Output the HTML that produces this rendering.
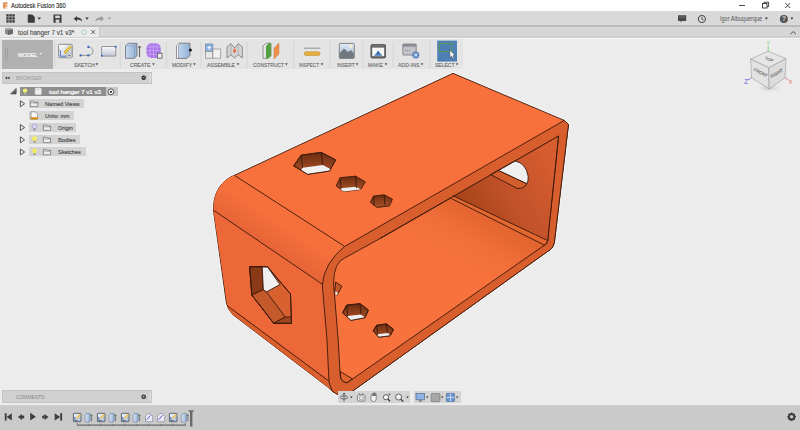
<!DOCTYPE html>
<html><head><meta charset="utf-8">
<style>
*{margin:0;padding:0;box-sizing:border-box}
html,body{width:800px;height:430px;overflow:hidden;background:#ECECEC;font-family:"Liberation Sans",sans-serif;position:relative}
.a{position:absolute}
.t{position:absolute;white-space:nowrap;line-height:1;transform-origin:0 0}
svg{position:absolute;overflow:visible}
</style></head><body>
<div class="a" style="left:0;top:0;width:800px;height:11px;background:#FFFFFF"></div>
<div class="a" style="left:0;top:11px;width:800px;height:14px;background:#D9D9D9"></div>
<div class="a" style="left:0;top:24.5px;width:800px;height:2px;background:linear-gradient(#C4C4C4,#B2B2B2 50%,#C4C4C4)"></div>
<div class="a" style="left:0;top:26.5px;width:800px;height:10px;background:#D6D6D6"></div>
<div class="a" style="left:0;top:36px;width:800px;height:2px;background:linear-gradient(#C6C6C6,#D8D8D8)"></div>
<div class="a" style="left:0;top:26.5px;width:99px;height:10px;background:#EAEAEA"></div>
<div class="a" style="left:0;top:38px;width:800px;height:1px;background:#F4F4F4"></div>
<div class="a" style="left:0;top:39px;width:463px;height:29.6px;background:#E4E4E4;border-radius:0 1px 1px 0"></div>
<div class="a" style="left:2px;top:39.8px;width:51px;height:28.8px;background:#B1B1B1"></div>
<div class="a" style="left:2px;top:71.5px;width:150px;height:12px;background:#D0D0D0;border:1px solid #C4C4C4"></div>
<div class="a" style="left:2px;top:390.4px;width:150px;height:12.2px;background:#D0D0D0;border:1px solid #C4C4C4"></div>
<div class="a" style="left:20px;top:87px;width:86px;height:8.6px;background:#8E8E8E"></div>
<div class="a" style="left:106px;top:87px;width:12px;height:8.6px;background:#C8C8C8"></div>
<div class="a" style="left:29.2px;top:98.8px;width:54.6px;height:9.5px;background:#D3D3D3"></div>
<div class="a" style="left:29.2px;top:110.9px;width:44.8px;height:9px;background:#D3D3D3"></div>
<div class="a" style="left:29.2px;top:122.9px;width:47px;height:9.1px;background:#D3D3D3"></div>
<div class="a" style="left:29.2px;top:135px;width:51px;height:9.1px;background:#D3D3D3"></div>
<div class="a" style="left:29.2px;top:147.1px;width:57px;height:9.1px;background:#D3D3D3"></div>

<svg class="a" style="left:0;top:0" width="800" height="430" viewBox="0 0 800 430">
<defs>
<linearGradient id="gRW" x1="470" y1="215" x2="556" y2="165" gradientUnits="userSpaceOnUse">
<stop offset="0" stop-color="#A84418"/><stop offset="0.45" stop-color="#C2522A"/><stop offset="1" stop-color="#D65D2E"/></linearGradient>
<linearGradient id="gFl" x1="500" y1="222" x2="470" y2="275" gradientUnits="userSpaceOnUse">
<stop offset="0" stop-color="#E2642E"/><stop offset="0.55" stop-color="#F26F3A"/><stop offset="1" stop-color="#F7723C"/></linearGradient>
<linearGradient id="gHole" x1="0" y1="0" x2="0" y2="1">
<stop offset="0" stop-color="#6A2C10"/><stop offset="1" stop-color="#B0522A"/></linearGradient>
<linearGradient id="gFil" x1="240" y1="195" x2="222" y2="222" gradientUnits="userSpaceOnUse">
<stop offset="0" stop-color="#F6703C"/><stop offset="1" stop-color="#E46236"/></linearGradient>
<linearGradient id="gBand" x1="0" y1="0" x2="0" y2="1">
<stop offset="0" stop-color="#D25A2A"/><stop offset="1" stop-color="#EA6A36"/></linearGradient>
</defs>
<g stroke="#3A180A" stroke-width="0.9" stroke-linejoin="round">
<!-- silhouette base -->
<path fill="none" stroke="#FAFAFA" stroke-width="2.6" d="M453,73.3 L564.3,120.4 L568.5,124.4 L554.4,242.3 Q553,249 547.7,251.4 L353,390.8 Q341,399 332,391 L327.7,387 L233,314.8 Q227.5,309.5 226.4,303 L213.4,210.2 C213,192 222,180 234.4,175.3 Z"/>
<path fill="#F8703C" d="M453,73.3 L564.3,120.4 L568.5,124.4 L554.4,242.3 Q553,249 547.7,251.4 L353,390.8 Q341,399 332,391 L327.7,387 L233,314.8 Q227.5,309.5 226.4,303 L213.4,210.2 C213,192 222,180 234.4,175.3 Z"/>
<!-- front-left face -->
<path fill="#EC6838" stroke="none" d="M213.4,210.2 L322.3,284.2 L327,340 L329,382 L227.3,304.9 Z"/>
<!-- fillet top/left -->
<path fill="url(#gFil)" stroke="none" d="M234.4,175.3 L344.7,246.4 Q330,257 324.2,274 L322.3,284.2 L213.4,210.2 C213,192 222,180 234.4,175.3 Z"/>
<!-- bottom fillet strip -->
<path fill="#DC5F2E" stroke="none" d="M227,305.5 L328.6,380.8 L332,391 L327.7,387 L233,314.8 Q227.5,309.5 226.4,303 Z"/>
<!-- rim -->
<path fill="#D95E2D" d="M344.7,246.4 L564.3,120.4 L568.5,124.4 L554.4,242.3 Q553,249 547.7,251.4 L353,390.8 Q341,399 332,391 L329,382 L327,340 L322.3,285 Q324,263 344.7,246.4 Z"/>
<!-- interior opening -->
<path fill="url(#gFl)" d="M380,238.5 L558.6,136 L549.8,220 L547.7,241 Q546.5,244.5 543.5,245.8 L347,382.8 Q342,382.5 340.3,377 L338.2,340 L333.5,283 Q334,262 344.7,258 Z"/>
<!-- right wall interior -->
<path fill="url(#gRW)" stroke="none" d="M452,196.5 L557.5,136.5 L549.8,220 L547.7,240.5 Z"/>
<path fill="#E4672F" stroke="none" d="M452.6,195.6 L547.5,240.5 L544.5,245.2 L451.5,198.6 Z"/>
<path fill="none" d="M452.6,195.6 L547.5,240.5 M451.5,198.6 L544.5,245.2"/>
<!-- inner bottom-left fillet line -->
<path fill="#E2652F" d="M340.4,371.6 L352.4,378.9 L347,382.6 Q342,382.4 340.6,377 Z"/>
<!-- round hole -->
<path fill="#F0F0F0" d="M498,170.3 L514.9,161 Q526,163 528.2,176.4 Q528.4,181.5 526.8,183.8 Z"/>
<path fill="#D25E2C" d="M490.6,174.6 L498,170.3 L526.8,183.8 Q524,189 517.5,188.6 Z"/>
<!-- top hex holes -->
<clipPath id="h1"><path d="M293.7,165.9 L301.2,155.2 L321.2,152.4 L335.6,159.9 L329.5,171 L307.7,174.3 Z"/></clipPath>
<path fill="url(#gHole)" d="M293.7,165.9 L301.2,155.2 L321.2,152.4 L335.6,159.9 L329.5,171 L307.7,174.3 Z"/>
<path fill="#F0F0F0" stroke="none" clip-path="url(#h1)" d="M295.2,178.9 L302.7,167.8 L322.7,165 L337.1,172.5 L331,183.6 L309.2,186.9 Z"/>
<path fill="none" d="M301.2,155.2 L302.5,167.6 M321.2,152.4 L322.6,164.6 M293.7,165.9 L301.2,155.2 L321.2,152.4 L335.6,159.9 L329.5,171 L307.7,174.3 Z"/>
<clipPath id="h2"><path d="M336.1,185.9 L340.2,177.7 L355.6,176.2 L365.3,181.8 L360.7,189.5 L343.8,191.5 Z"/></clipPath>
<path fill="url(#gHole)" d="M336.1,185.9 L340.2,177.7 L355.6,176.2 L365.3,181.8 L360.7,189.5 L343.8,191.5 Z"/>
<path fill="#F0F0F0" stroke="none" clip-path="url(#h2)" d="M336.6,196.9 L340.7,188.2 L356.1,186.7 L365.8,192.3 L361.2,200 L344.3,202 Z"/>
<path fill="none" d="M340.2,177.7 L341,189 M355.6,176.2 L356.4,188.2"/>
<path fill="url(#gHole)" d="M370.4,202.3 L373.5,196.1 L384.2,194.8 L392.4,199.2 L389.4,205.9 L377.1,207.4 Z"/>
<path fill="none" d="M373.5,196.1 L374.2,206 M384.2,194.8 L385,205"/>
<!-- floor hex holes -->
<clipPath id="h4"><path d="M342.6,312.8 L346.7,305.1 L360,303.7 L368.4,310 L364.9,317.7 L350.9,320.4 Z"/></clipPath>
<path fill="url(#gHole)" d="M342.6,312.8 L346.7,305.1 L360,303.7 L368.4,310 L364.9,317.7 L350.9,320.4 Z"/>
<path fill="#F0F0F0" stroke="none" clip-path="url(#h4)" d="M343.6,324 L347.7,316 L361,314.6 L369.4,321 L365.9,328.7 L351.9,331.4 Z"/>
<path fill="none" d="M346.7,305.1 L347.6,315.8 M360,303.7 L361,314.6 M342.6,312.8 L346.7,305.1 L360,303.7 L368.4,310 L364.9,317.7 L350.9,320.4 Z"/>
<clipPath id="h5"><path d="M373.2,330.9 L376.7,325.3 L386.5,323.9 L393.5,329.5 L390,335.8 L378.8,337.2 Z"/></clipPath>
<path fill="url(#gHole)" d="M373.2,330.9 L376.7,325.3 L386.5,323.9 L393.5,329.5 L390,335.8 L378.8,337.2 Z"/>
<path fill="#F0F0F0" stroke="none" clip-path="url(#h5)" d="M374.2,340 L377.7,334.3 L387.5,332.9 L394.5,338.5 L391,344.8 L379.8,346.2 Z"/>
<path fill="none" d="M376.7,325.3 L377.5,334.3 M386.5,323.9 L387.3,333 M373.2,330.9 L376.7,325.3 L386.5,323.9 L393.5,329.5 L390,335.8 L378.8,337.2 Z"/>
<path fill="#C4562A" d="M335.6,282 L341.9,286.3 L337,295.3 L334.8,292 Z"/>
<path fill="#F0F0F0" stroke="none" d="M335.5,291 L337.8,293 L337,295.3 L335.2,293.8 Z"/>
<!-- big hex on left face -->
<path fill="#D9612F" d="M249.7,266.8 L267.5,266.8 L290.5,294 L291.5,323.3 L273.7,323.3 L251.8,295 Z"/>
<path fill="#8A3A16" d="M249.7,266.8 L262.2,266.8 L263.3,289.8 L251.8,295 Z"/>
<path fill="#F0F0F0" d="M262.2,266.8 L267.5,266.8 L280,284.6 L266.4,291.9 L263.3,289.8 Z"/>
<path fill="#C45A2C" d="M251.8,295 L263.3,289.8 L266.4,291.9 L285.3,317 L273.7,323.3 Z"/>
<path fill="#9E4620" d="M273.7,323.3 L285.3,317 L291.3,317 L291.5,323.3 Z"/>
<path fill="none" d="M249.7,266.8 L267.5,266.8 L290.5,294 L291.5,323.3 L273.7,323.3 L251.8,295 Z"/>

<!-- edges -->
<path fill="none" d="M380,238.5 L558.6,136 L549.8,220 L547.7,241 Q546.5,244.5 543.5,245.8"/>
<path fill="none" d="M234.4,175.3 L344.7,246.4 M213.4,210.2 L322.3,284.2 M227,305.5 L328.6,380.8"/>
</g>
</svg>

<!-- bottom bar -->
<div class="a" style="left:0;top:404.5px;width:800px;height:26px;background:linear-gradient(#D4D4D4,#CACACA 1.2px)"></div>
<!-- title icon F -->
<svg style="left:0;top:0" width="20" height="12">
<defs><linearGradient id="fg" x1="0" y1="0" x2="0" y2="1"><stop offset="0" stop-color="#F0A050"/><stop offset="1" stop-color="#E87830"/></linearGradient></defs>
<rect x="2.8" y="2.2" width="5" height="6.6" fill="#F6E2CC"/>
<path d="M3.3,2.6 H7.3 V4.1 H4.9 V5.1 H6.8 V6.5 H4.9 V8.6 H3.3 Z" fill="#DE8440"/>
</svg>
<!-- window controls -->
<svg style="left:730px;top:0" width="70" height="12">
<line x1="9" y1="5.5" x2="15" y2="5.5" stroke="#333" stroke-width="0.9"/>
<rect x="32.5" y="3.5" width="4.5" height="4.5" fill="none" stroke="#333" stroke-width="0.9"/>
<path d="M34,3.5 V2.2 H38.6 V6.6 H37" fill="none" stroke="#333" stroke-width="0.9"/>
<path d="M55.3,3 L60.2,8 M60.2,3 L55.3,8" stroke="#333" stroke-width="0.9"/>
</svg>
<!-- toolbar icons -->
<svg style="left:0;top:11px" width="120" height="15">
<g fill="#3A3A3A">
<rect x="6.3" y="3.2" width="2.4" height="2.4"/><rect x="9.3" y="3.2" width="2.4" height="2.4"/><rect x="12.3" y="3.2" width="2.4" height="2.4"/>
<rect x="6.3" y="6.2" width="2.4" height="2.4"/><rect x="9.3" y="6.2" width="2.4" height="2.4"/><rect x="12.3" y="6.2" width="2.4" height="2.4"/>
<rect x="6.3" y="9.2" width="2.4" height="2.4"/><rect x="9.3" y="9.2" width="2.4" height="2.4"/><rect x="12.3" y="9.2" width="2.4" height="2.4"/>
</g>
<path d="M27.8,3.5 H32.3 L34.8,6 V11.8 H27.8 Z" fill="#3C3C3C"/>
<path d="M37.3,6.4 H41.1 L39.2,8.8 Z" fill="#3C3C3C"/>
<path d="M53.5,3.5 H61.5 V11.8 H53.5 Z" fill="#3C3C3C"/>
<rect x="55.2" y="4.6" width="4.6" height="2.5" fill="#D9D9D9"/>
<rect x="55.6" y="8.6" width="3.8" height="3.2" fill="#D9D9D9"/>
<path d="M73.6,7.8 L77,5 V6.6 C80,6.6 82,7.6 82,10.6 C80.8,9 79.4,8.8 77,8.8 V10.5 Z" fill="#3C3C3C"/>
<path d="M85.2,6.4 H88.8 L87,8.8 Z" fill="#3C3C3C"/>
<path d="M104,7.8 L100.6,5 V6.6 C97.6,6.6 95.6,7.6 95.6,10.6 C96.8,9 98.2,8.8 100.6,8.8 V10.5 Z" fill="#9A9A9A"/>
<path d="M107.6,6.4 H111.2 L109.4,8.8 Z" fill="#9A9A9A"/>
</svg>
<svg style="left:670px;top:11px" width="130" height="15">
<path d="M8,4.2 H16.2 V10 H12 L10.8,11.6 L10.6,10 H8 Z" fill="#4A4A4A"/>
<line x1="9.2" y1="6" x2="15" y2="6" stroke="#9A9A9A" stroke-width="0.5"/>
<circle cx="31.9" cy="8" r="3.6" fill="none" stroke="#444" stroke-width="1"/>
<path d="M31.9,5.8 V8 L33.6,9.2" fill="none" stroke="#444" stroke-width="0.9"/>
<path d="M95,6.5 H97.8 L96.4,8.8 Z" fill="#333"/>
<circle cx="113.9" cy="8" r="4" fill="#555"/>
<text x="113.9" y="10.4" font-size="6.5" font-weight="700" fill="#D9D9D9" text-anchor="middle" font-family="Liberation Sans">?</text>
<path d="M120.6,6.5 H123.3 L121.95,8.8 Z" fill="#333"/>
</svg>
<!-- tab -->
<svg style="left:0;top:26px" width="800" height="14">
<path d="M5,2.8 L10,1.8 L13,3.2 V7.8 L8,9 L5,7.6 Z" fill="#8A8A8A"/>
<path d="M5,2.8 L10,1.8 L13,3.2 L8,4.2 Z" fill="#A8A8A8"/>
<path d="M8,4.2 L13,3.2 V7.8 L8,9 Z" fill="#6A6A6A"/>
<circle cx="84" cy="6.2" r="2.3" fill="none" stroke="#8FCFB8" stroke-width="0.8"/>
<path d="M91.2,4 L95.2,8 M95.2,4 L91.2,8" stroke="#555" stroke-width="0.9"/>
<line x1="99.5" y1="0" x2="99.5" y2="11" stroke="#C4C4C4" stroke-width="1"/>
<path d="M790.5,8.2 L793.2,5.5 L795.9,8.2" fill="none" stroke="#444" stroke-width="1"/>
</svg>
<!-- ribbon icons -->
<svg style="left:0;top:38px" width="470" height="35">
<defs>
<linearGradient id="lb" x1="0" y1="0" x2="1" y2="1"><stop offset="0" stop-color="#FFFFFF"/><stop offset="1" stop-color="#B8C4D6"/></linearGradient>
<linearGradient id="rb" x1="0" y1="0" x2="0" y2="1"><stop offset="0" stop-color="#FAFAFC"/><stop offset="1" stop-color="#C2C6D6"/></linearGradient>
<linearGradient id="bx" x1="0" y1="0" x2="1" y2="0"><stop offset="0" stop-color="#C8DAF0"/><stop offset="1" stop-color="#90B0D6"/></linearGradient>
<linearGradient id="sky" x1="0" y1="0" x2="0" y2="1"><stop offset="0" stop-color="#DDE8F4"/><stop offset="1" stop-color="#A8C0DA"/></linearGradient>
</defs>
<!-- grip on MODEL -->
<line x1="5.5" y1="9.7" x2="5.5" y2="21.4" stroke="#9A9A9A" stroke-width="0.7"/><line x1="7.5" y1="9.7" x2="7.5" y2="21.4" stroke="#9A9A9A" stroke-width="0.7"/>
<path d="M39.8,15 H42 L40.9,16.8 Z" fill="#FFF"/>
<!-- separators -->
<g stroke="#D2D2D2" stroke-width="0.8">
<line x1="55" y1="4" x2="55" y2="30"/><line x1="120.3" y1="4" x2="120.3" y2="30"/><line x1="166.3" y1="4" x2="166.3" y2="30"/>
<line x1="201" y1="4" x2="201" y2="30"/><line x1="247" y1="4" x2="247" y2="30"/><line x1="293.7" y1="4" x2="293.7" y2="30"/>
<line x1="330" y1="4" x2="330" y2="30"/><line x1="363" y1="4" x2="363" y2="30"/><line x1="393" y1="4" x2="393" y2="30"/>
<line x1="429.8" y1="4" x2="429.8" y2="30"/>
</g>
<!-- sketch create -->
<rect x="58.6" y="6.3" width="13.6" height="13.4" rx="0.8" fill="url(#lb)" stroke="#808080" stroke-width="0.9"/>
<path d="M60.4,12 V18.2 H66" fill="none" stroke="#3A6CC8" stroke-width="0.9"/>
<path d="M64.5,15 L70.8,8.4" stroke="#B08A20" stroke-width="2.6"/>
<path d="M64.5,15 L70.8,8.4" stroke="#F2D04A" stroke-width="1.7"/>
<circle cx="69.3" cy="17.6" r="2.6" fill="#F4F4F4" stroke="#909090" stroke-width="0.6"/>
<path d="M69.3,16 V19.2 M67.7,17.6 H70.9" stroke="#707070" stroke-width="0.8"/>
<!-- arc line -->
<path d="M80.6,17.4 H88.3 M88.3,8.9 C94.5,8.9 94.5,17.4 88.3,17.4" fill="none" stroke="#8A8A8A" stroke-width="0.9"/>
<circle cx="80.6" cy="17.4" r="1.1" fill="#2F5FC0"/><circle cx="88.3" cy="17.4" r="1.1" fill="#2F5FC0"/><circle cx="88.3" cy="8.9" r="1.1" fill="#2F5FC0"/>
<!-- rect -->
<rect x="101.6" y="8.5" width="14.2" height="9.6" rx="0.6" fill="url(#rb)" stroke="#8A8A8A" stroke-width="0.9"/>
<circle cx="115.6" cy="8.8" r="1" fill="#2F5FC0"/><circle cx="101.9" cy="17.8" r="1" fill="#2F5FC0"/>
<!-- extrude -->
<path d="M125.5,8 L128,5.3 H137 V17.5 L134.5,20.3 H125.5 Z" fill="url(#bx)" stroke="#6E6E6E" stroke-width="0.8"/>
<path d="M125.5,8 H134.5 V20.3 M134.5,8 L137,5.3" fill="none" stroke="#7E8EA8" stroke-width="0.5"/>
<path d="M139.6,19 V8.2 M138.4,9.6 L139.6,8 L140.8,9.6" fill="none" stroke="#333" stroke-width="0.8"/>
<!-- form sphere -->
<rect x="146.5" y="5.2" width="14.2" height="14.8" rx="5" fill="#A874E8"/>
<g stroke="#D9B8FF" stroke-width="0.6"><line x1="146.5" y1="9" x2="160.7" y2="9"/><line x1="146.5" y1="12.6" x2="160.7" y2="12.6"/><line x1="146.5" y1="16.2" x2="160.7" y2="16.2"/>
<line x1="150.2" y1="5.2" x2="150.2" y2="20"/><line x1="153.6" y1="5.2" x2="153.6" y2="20"/><line x1="157" y1="5.2" x2="157" y2="20"/></g>
<rect x="157.4" y="15.2" width="4.6" height="5" fill="#EEE" stroke="#444" stroke-width="0.7"/>
<!-- modify press pull -->
<path d="M176.5,8 L179.5,5.2 H190 V17.4 L187,20.4 H176.5 Z" fill="url(#bx)" stroke="#6E6E6E" stroke-width="0.8"/>
<path d="M176.5,8 L179.5,5.2 L181,5.2 L178.5,8 V20.4 H176.5 Z" fill="#F0F4F8" stroke="#6E6E6E" stroke-width="0.5"/>
<circle cx="190.4" cy="12" r="1.5" fill="#111"/>
<!-- assemble new component -->
<rect x="205.3" y="6" width="7.6" height="7.4" fill="#8AB0DE" stroke="#6A7A90" stroke-width="0.6"/>
<path d="M207.3,9.7 H211 M209.15,7.8 V11.6" stroke="#FFF" stroke-width="1"/>
<rect x="205.3" y="13.4" width="7.6" height="6.8" fill="#E8E8E8" stroke="#7A7A7A" stroke-width="0.6"/>
<path d="M212.9,11 H220.6 V20.2 H212.9 Z" fill="#F2F2F2" stroke="#7A7A7A" stroke-width="0.6"/>
<!-- joint -->
<path d="M227,9 L231,5.6 L234.6,10 L238.2,5.6 L242.4,9 V20 L238.2,16.8 L234.6,20 L231,16.8 L227,20 Z" fill="#D4D4D4" stroke="#6A6A6A" stroke-width="0.7"/>
<path d="M231,5.6 V16.8 M238.2,5.6 V16.8" stroke="#8A8A8A" stroke-width="0.5"/>
<path d="M233,13 L234.6,10 L236.2,13 L234.6,15.5 Z" fill="#E86A3A"/>
<!-- construct -->
<path d="M263,8 L266,5.2 H271 V17.8 L268,20.4 H263 Z" fill="#E6E6E6" stroke="#6E6E6E" stroke-width="0.7"/>
<path d="M266,8 L269,5.2 H271 V17.8 L268,20.4 H266 Z" fill="#55A040"/>
<path d="M274,10 L279,5 V16 L274,21 Z" fill="#F0904A" stroke="#B06A30" stroke-width="0.4"/>
<!-- inspect -->
<line x1="304" y1="10.2" x2="320.3" y2="10.2" stroke="#8A8A8A" stroke-width="0.9"/>
<rect x="304.3" y="13.8" width="15.8" height="3.6" rx="1.6" fill="#E8B040" stroke="#B08020" stroke-width="0.5"/>
<!-- insert -->
<rect x="339.3" y="5.4" width="15" height="15" rx="0.8" fill="url(#sky)" stroke="#6A6A6A" stroke-width="0.8"/>
<path d="M339.8,19.9 L339.8,15 L344,10.6 L348,14 L351,12 L353.8,15 V19.9 Z" fill="#707880"/>
<circle cx="351" cy="8.4" r="1.3" fill="#FFF8D0"/>
<!-- make -->
<rect x="370.4" y="6" width="15.6" height="14.4" rx="2" fill="#5E5E5E"/>
<rect x="372.2" y="9.6" width="12" height="8.6" fill="#F8F8F8"/>
<line x1="372.4" y1="7.8" x2="384" y2="7.8" stroke="#9A9A9A" stroke-width="0.6"/>
<path d="M375.5,16.5 L378.2,12.4 L380.9,16.5 Z" fill="#2E68B0"/>
<rect x="374.5" y="16.4" width="7.4" height="1.3" fill="#2E68B0"/>
<!-- add-ins -->
<rect x="402.8" y="6" width="13.4" height="11" rx="0.8" fill="#C2C2CA" stroke="#6A6A6A" stroke-width="0.7"/>
<rect x="402.8" y="6" width="13.4" height="2.6" fill="#8A8A92"/>
<line x1="405" y1="12.5" x2="410" y2="12.5" stroke="#6A6A6A" stroke-width="0.6" stroke-dasharray="1 1"/>
<circle cx="415.8" cy="17" r="3.3" fill="#6A96D8" stroke="#3A5A90" stroke-width="0.5"/>
<path d="M414.4,15.6 L417.2,18.4 M417.2,15.6 L414.4,18.4" stroke="#FFF" stroke-width="0.8"/>
<!-- select -->
<rect x="437.2" y="2.6" width="19.8" height="21" fill="#4E80B6"/>
<rect x="439.4" y="5.6" width="12.4" height="8" fill="none" stroke="#5E9A4E" stroke-width="0.9"/>
<path d="M450,12.2 V19.6 L451.7,18 L453,20.6 L454.1,20 L452.9,17.5 L455.1,17.4 Z" fill="#FFF" stroke="#333" stroke-width="0.4"/>
<!-- label arrows -->
<g fill="#555">
<path d="M95.6,25.2 H98.2 L96.9,27.6 Z"/><path d="M152.2,25.2 H154.8 L153.5,27.6 Z"/><path d="M193.2,25.2 H195.8 L194.5,27.6 Z"/>
<path d="M236.7,25.2 H239.3 L238.0,27.6 Z"/><path d="M285.1,25.2 H287.7 L286.4,27.6 Z"/><path d="M320.7,25.2 H323.3 L322.0,27.6 Z"/>
<path d="M355.7,25.2 H358.3 L357.0,27.6 Z"/><path d="M384.7,25.2 H387.3 L386.0,27.6 Z"/><path d="M420.7,25.2 H423.3 L422.0,27.6 Z"/>
<path d="M455.7,25.2 H458.3 L457.0,27.6 Z"/>
</g>
</svg>
<!-- browser header icons -->
<svg style="left:0;top:70px" width="160" height="90">
<path d="M5,7.9 L7.2,6.6 V9.2 Z M7.4,7.9 L9.6,6.6 V9.2 Z" fill="#333"/>
<line x1="13.5" y1="4" x2="13.5" y2="12" stroke="#C6C6C6" stroke-width="0.6"/>
<circle cx="143.7" cy="7.7" r="2.3" fill="#2A2A2A"/>
<line x1="142.6" y1="7.7" x2="144.8" y2="7.7" stroke="#DDD" stroke-width="0.7"/>
<rect x="149.5" y="4" width="1.4" height="8" fill="#E4E4E4"/>
<!-- root row -->
<path d="M10.8,23.8 L16,18.6 V23.8 Z" fill="none" stroke="#2A2A2A" stroke-width="0.9"/>
<path d="M12.5,23.3 L15.5,20.3 V23.3 Z" fill="#2A2A2A"/>
<circle cx="25.1" cy="20.6" r="2.2" fill="#F4EC70"/>
<rect x="24" y="22.4" width="2.2" height="1.9" fill="#B8B8A0"/>
<rect x="34.9" y="17.8" width="6.7" height="7" rx="1.4" fill="#EEEEEE" stroke="#B0B0B0" stroke-width="0.4"/>
<path d="M35,19.5 H41.5" stroke="#C8C8C8" stroke-width="0.5"/>
<circle cx="110.9" cy="21.8" r="2.9" fill="#FFF" stroke="#333" stroke-width="0.8"/>
<circle cx="110.9" cy="21.8" r="1.1" fill="#222"/>
<!-- tree triangles -->
<g fill="none" stroke="#444" stroke-width="0.9" stroke-linejoin="round">
<path d="M20.4,30.8 L24.6,33.8 L20.4,36.8 Z"/>
<path d="M20.4,54.6 L24.6,57.6 L20.4,60.6 Z"/>
<path d="M20.4,66.8 L24.6,69.8 L20.4,72.8 Z"/>
<path d="M20.4,79 L24.6,82 L20.4,85 Z"/>
</g>
<!-- folders -->
<g fill="#EDEDED" stroke="#6A6A6A" stroke-width="0.7">
<path d="M30.4,31.2 H33.5 L34.3,32.2 H37.8 V36.6 H30.4 Z"/>
<path d="M43.3,55 H46.4 L47.2,56 H50.6 V60.4 H43.3 Z"/>
<path d="M43.3,67.2 H46.4 L47.2,68.2 H50.6 V72.6 H43.3 Z"/>
<path d="M43.3,79.4 H46.4 L47.2,80.4 H50.6 V84.8 H43.3 Z"/>
</g>
<g stroke="#6A6A6A" stroke-width="0.5"><line x1="30.4" y1="33" x2="37.8" y2="33"/><line x1="43.3" y1="56.8" x2="50.6" y2="56.8"/><line x1="43.3" y1="69" x2="50.6" y2="69"/><line x1="43.3" y1="81.2" x2="50.6" y2="81.2"/></g>
<!-- units doc -->
<path d="M31,41.8 H35.2 L37.6,44.2 V49.2 H31 Z" fill="#F8F8F8" stroke="#6A6A6A" stroke-width="0.6"/>
<rect x="30.6" y="47.2" width="7.4" height="2.2" fill="#D8901A"/>
<!-- bulbs -->
<circle cx="34.5" cy="56.4" r="2.4" fill="#D8D4F6" stroke="#8A86C0" stroke-width="0.5"/>
<rect x="33.3" y="58.6" width="2.4" height="2.2" fill="#9A9AA8"/>
<circle cx="34.5" cy="68.6" r="2.4" fill="#F6EC60"/>
<rect x="33.3" y="70.8" width="2.4" height="2.2" fill="#A8A890"/>
<circle cx="34.5" cy="80.8" r="2.4" fill="#F6EC60"/>
<rect x="33.3" y="83" width="2.4" height="2.2" fill="#A8A890"/>
</svg>
<!-- comments icon -->
<svg style="left:0;top:388px" width="160" height="16">
<circle cx="143.7" cy="8.7" r="2.3" fill="#2A2A2A"/>
<path d="M142.6,8.7 H144.8 M143.7,7.6 V9.8" stroke="#DDD" stroke-width="0.7"/>
<rect x="149.5" y="5" width="1.4" height="8" fill="#E4E4E4"/>
</svg>
<!-- timeline -->
<svg style="left:0;top:405px" width="200" height="25">
<defs>
<linearGradient id="tsk" x1="0" y1="0" x2="1" y2="1"><stop offset="0" stop-color="#FFFFFF"/><stop offset="1" stop-color="#A0B4D0"/></linearGradient>
<linearGradient id="tex" x1="0" y1="0" x2="1" y2="0"><stop offset="0" stop-color="#DCE8F6"/><stop offset="1" stop-color="#8EACD6"/></linearGradient>
<g id="tsi">
<rect x="0.4" y="0.4" width="7.6" height="8.4" rx="0.6" fill="url(#tsk)" stroke="#505A68" stroke-width="0.9"/>
<path d="M1.8,4 V7.6 H4.5" fill="none" stroke="#2C4C88" stroke-width="0.8"/>
<path d="M3.5,6 L7.4,1.4" stroke="#E8C640" stroke-width="1.4"/>
</g>
<g id="tei">
<path d="M0.6,2 L1.8,0.6 H5.8 V7.8 L4.6,9 H0.6 Z" fill="url(#tex)" stroke="#6A7890" stroke-width="0.6"/>
<path d="M7.2,8.4 V2 M6.6,2.8 L7.2,1.6 L7.8,2.8" fill="none" stroke="#444" stroke-width="0.6"/>
</g>
<g id="tfi">
<path d="M0.6,3.2 L3.2,0.6 H5.2 L7.8,3.4 V8.8 H0.6 Z" fill="#ECEAF6" stroke="#7A7A8A" stroke-width="0.6"/>
<path d="M1.8,6.8 L5.6,2.4" stroke="#5060C8" stroke-width="1"/>
</g>
</defs>
<g fill="#3C3C3C">
<rect x="4.8" y="8.2" width="1.8" height="7.4"/><path d="M11.8,8.2 V15.6 L6.6,11.9 Z"/>
<path d="M22,9 V15 L17.9,12 Z"/><rect x="22" y="10.6" width="2.2" height="2.8"/>
<path d="M30.2,7.7 V15.6 L35.9,11.65 Z"/>
<path d="M44.4,9 V15 L48.6,12 Z"/><rect x="42.2" y="10.6" width="2.2" height="2.8"/>
<path d="M54.7,8.2 V15.6 L60.2,11.9 Z"/><rect x="60.2" y="8.2" width="1.9" height="7.4"/>
</g>
<use href="#tsi" x="73" y="7.9"/><use href="#tei" x="84.4" y="8"/>
<use href="#tsi" x="97" y="7.9"/><use href="#tei" x="108.4" y="8"/>
<use href="#tsi" x="121" y="7.9"/><use href="#tei" x="132.4" y="8"/>
<use href="#tfi" x="144.9" y="7.9"/><use href="#tfi" x="156.9" y="7.9"/>
<use href="#tsi" x="169" y="7.9"/><use href="#tei" x="180.7" y="8"/>
<path d="M77,20.2 H186" stroke="#6A6A6A" stroke-width="1.3"/>
<g stroke="#6A6A6A" stroke-width="0.8"><line x1="77.4" y1="18" x2="77.4" y2="20.5"/><line x1="89" y1="18.8" x2="89" y2="20.5"/><line x1="101" y1="18.8" x2="101" y2="20.5"/><line x1="113" y1="18.8" x2="113" y2="20.5"/><line x1="125" y1="18.8" x2="125" y2="20.5"/><line x1="137" y1="18.8" x2="137" y2="20.5"/><line x1="149" y1="18.8" x2="149" y2="20.5"/><line x1="161" y1="18.8" x2="161" y2="20.5"/><line x1="173" y1="18.8" x2="173" y2="20.5"/><line x1="185.6" y1="18" x2="185.6" y2="20.5"/></g>
<path d="M188,5.2 H194.2 L192.4,7.6 V21.4 H190 V7.6 Z" fill="#6A6A6A"/>
</svg>
<!-- gear -->
<svg style="left:785px;top:410px" width="14" height="14">
<g transform="translate(6.6,6.8)">
<circle r="2.9" fill="none" stroke="#3A3A3A" stroke-width="1.5"/>
<g fill="#3A3A3A"><rect x="-0.8" y="-4.2" width="1.6" height="8.4"/><rect x="-0.8" y="-4.2" width="1.6" height="8.4" transform="rotate(45)"/><rect x="-0.8" y="-4.2" width="1.6" height="8.4" transform="rotate(90)"/><rect x="-0.8" y="-4.2" width="1.6" height="8.4" transform="rotate(135)"/></g>
<circle r="1.7" fill="#CACACA"/>
</g>
</svg>
<!-- nav bar -->
<div class="a" style="left:338.3px;top:391px;width:72px;height:12.4px;background:#D4D4D4"></div>
<div class="a" style="left:414px;top:391px;width:47px;height:12.4px;background:#D4D4D4"></div>
<svg style="left:335px;top:388px" width="130" height="18">
<g fill="none" stroke="#3E3E3E" stroke-width="0.7">
<ellipse cx="9" cy="9.4" rx="3.8" ry="1.6"/>
<path d="M9,5 V13.6 M7.6,6.3 L9,5 L10.4,6.3"/>
</g>
<path d="M15,8.4 H17.6 L16.3,10.2 Z" fill="#333"/>
<rect x="22.4" y="7" width="7.6" height="6" rx="1.2" fill="#F0F0F0" stroke="#555" stroke-width="0.7"/>
<path d="M24,5 L25.4,7 M28.4,5 L27,7" stroke="#555" stroke-width="0.6"/>
<rect x="24.2" y="9" width="4" height="2.4" fill="none" stroke="#777" stroke-width="0.5"/>
<path d="M36,11 C36,8 36.3,6.5 37,6 C37.6,5.6 37.9,6.4 37.9,8 V5.6 C37.9,4.8 39,4.8 39,5.6 V8 V5.3 C39,4.5 40.1,4.5 40.1,5.3 V8 V6 C40.1,5.3 41.2,5.3 41.2,6 V10.5 C41.2,12.5 40,13.6 38.5,13.6 C37,13.6 36,12.6 36,11 Z" fill="#F4F4F4" stroke="#444" stroke-width="0.6"/>
<circle cx="51" cy="9.2" r="2.6" fill="#F4F4F4" stroke="#444" stroke-width="0.8"/>
<path d="M52.9,11.1 L55,13.2" stroke="#333" stroke-width="1.3"/>
<path d="M54.4,5.2 V7.6 M53.2,6.4 H55.6" stroke="#444" stroke-width="0.5"/>
<circle cx="63.6" cy="9" r="3" fill="#F4F4F4" stroke="#444" stroke-width="0.8"/>
<path d="M65.8,11.2 L68.2,13.6" stroke="#333" stroke-width="1.3"/>
<path d="M71.2,8.4 H73.8 L72.5,10.2 Z" fill="#333"/>
<rect x="81" y="5.4" width="8.6" height="6.4" fill="#8EB4E8" stroke="#5A6A88" stroke-width="0.7"/>
<path d="M83.5,13.4 H87.2 L86.2,11.8 H84.5 Z" fill="#777"/>
<path d="M91,8.4 H93.4 L92.2,10.2 Z" fill="#333"/>
<rect x="96.2" y="5.6" width="8.8" height="8" rx="0.8" fill="#A8A8A8" stroke="#6A6A6A" stroke-width="0.6"/>
<path d="M106,8.4 H108.4 L107.2,10.2 Z" fill="#333"/>
<rect x="111.4" y="5.4" width="8" height="8" rx="0.6" fill="#6C98D4" stroke="#3E5E90" stroke-width="0.6"/>
<path d="M115.4,5.4 V13.4 M111.4,9.4 H119.4" stroke="#D8E6F8" stroke-width="0.8"/>
<path d="M121,8.4 H123.4 L122.2,10.2 Z" fill="#333"/>
</svg>
<!-- view cube -->
<svg style="left:735px;top:38px" width="65" height="60">
<defs><radialGradient id="cs" cx="0.5" cy="0.5" r="0.5"><stop offset="0" stop-color="#C8C8C8"/><stop offset="1" stop-color="#ECECEC" stop-opacity="0"/></radialGradient></defs>
<ellipse cx="34" cy="50" rx="16" ry="5" fill="url(#cs)"/>
<path d="M33.2,13.3 L51,20.6 L33.8,29.8 L15.6,21 Z" fill="#E6E6E6" stroke="#8A8A8A" stroke-width="0.5"/>
<path d="M15.6,21 L33.8,29.8 L34.2,51 L16.6,39.8 Z" fill="#E2E2E2" stroke="#8A8A8A" stroke-width="0.5"/>
<path d="M33.8,29.8 L51,20.6 L50,39.8 L34.2,51 Z" fill="#DCDCDC" stroke="#8A8A8A" stroke-width="0.5"/>
<line x1="33.2" y1="13.3" x2="33.2" y2="8" stroke="#6ACF6A" stroke-width="0.8"/>
<line x1="16.6" y1="39.8" x2="13" y2="42" stroke="#6A6AE0" stroke-width="0.8"/>
<line x1="50" y1="39.8" x2="53.5" y2="42" stroke="#E07070" stroke-width="0.8"/>
<text x="33.2" y="7.2" font-size="5.4" fill="#6CCB6C" text-anchor="middle" font-family="Liberation Sans">Y</text>
<text x="11.2" y="45.6" font-size="6.4" fill="#5A5AE0" text-anchor="middle" font-family="Liberation Sans">Z</text>
<text x="55.6" y="46" font-size="6" fill="#E86A6A" text-anchor="middle" font-family="Liberation Sans">X</text>
<text font-size="4.4" fill="#6E6E6E" stroke="#6E6E6E" stroke-width="0.15" font-family="Liberation Sans" text-anchor="middle" transform="translate(33.6,22.4) rotate(22) scale(1,0.8)">TOP</text>
<text font-size="4.4" fill="#6E6E6E" stroke="#6E6E6E" stroke-width="0.15" font-family="Liberation Sans" text-anchor="middle" transform="translate(25,36) rotate(28) skewY(0)">FRONT</text>
<text font-size="4.4" fill="#6E6E6E" stroke="#6E6E6E" stroke-width="0.15" font-family="Liberation Sans" text-anchor="middle" transform="translate(42.4,36.6) rotate(-30)">RIGHT</text>
</svg>

<div class="t" style="left:11.10px;top:2.81px;font-size:6.6px;color:#222222;font-weight:400;transform:scaleX(0.885);-webkit-text-stroke:0.1px #222222;">Autodesk Fusion 360</div><div class="t" style="left:17.60px;top:29.88px;font-size:6.4px;color:#484848;font-weight:400;transform:scaleX(0.990);-webkit-text-stroke:0.12px #484848;">tool hanger 7 v1 v3*</div><div class="t" style="left:720.10px;top:16.47px;font-size:6.3px;color:#555555;font-weight:400;transform:scaleX(0.878);">Igor Albuquerque</div><div class="t" style="left:17.70px;top:52.22px;font-size:6.0px;color:#FFFFFF;font-weight:400;transform:scaleX(0.909);-webkit-text-stroke:0.2px #FFFFFF;">MODEL</div><div class="t" style="left:73.60px;top:63.37px;font-size:5.7px;color:#686868;font-weight:400;transform:scaleX(0.906);-webkit-text-stroke:0.12px #686868;">SKETCH</div><div class="t" style="left:130.40px;top:63.37px;font-size:5.7px;color:#686868;font-weight:400;transform:scaleX(0.896);-webkit-text-stroke:0.12px #686868;">CREATE</div><div class="t" style="left:171.70px;top:63.37px;font-size:5.7px;color:#686868;font-weight:400;transform:scaleX(0.908);-webkit-text-stroke:0.12px #686868;">MODIFY</div><div class="t" style="left:207.30px;top:63.37px;font-size:5.7px;color:#686868;font-weight:400;transform:scaleX(0.913);-webkit-text-stroke:0.12px #686868;">ASSEMBLE</div><div class="t" style="left:252.70px;top:63.37px;font-size:5.7px;color:#686868;font-weight:400;transform:scaleX(0.871);-webkit-text-stroke:0.12px #686868;">CONSTRUCT</div><div class="t" style="left:299.30px;top:63.37px;font-size:5.7px;color:#686868;font-weight:400;transform:scaleX(0.811);-webkit-text-stroke:0.12px #686868;">INSPECT</div><div class="t" style="left:336.70px;top:63.37px;font-size:5.7px;color:#686868;font-weight:400;transform:scaleX(0.848);-webkit-text-stroke:0.12px #686868;">INSERT</div><div class="t" style="left:368.10px;top:63.37px;font-size:5.7px;color:#686868;font-weight:400;transform:scaleX(0.943);-webkit-text-stroke:0.12px #686868;">MAKE</div><div class="t" style="left:397.70px;top:63.37px;font-size:5.7px;color:#686868;font-weight:400;transform:scaleX(0.923);-webkit-text-stroke:0.12px #686868;">ADD-INS</div><div class="t" style="left:434.70px;top:63.37px;font-size:5.7px;color:#686868;font-weight:400;transform:scaleX(0.885);-webkit-text-stroke:0.12px #686868;">SELECT</div><div class="t" style="left:15.70px;top:75.59px;font-size:5.8px;color:#9C9C9C;font-weight:400;transform:scaleX(0.855);">BROWSER</div><div class="t" style="left:48.50px;top:89.71px;font-size:5.9px;color:#FFFFFF;font-weight:400;transform:scaleX(1.034);-webkit-text-stroke:0.2px #FFFFFF;">tool hanger 7 v1 v3</div><div class="t" style="left:45.00px;top:102.11px;font-size:5.9px;color:#4A4A4A;font-weight:400;transform:scaleX(0.955);-webkit-text-stroke:0.15px #4A4A4A;">Named Views</div><div class="t" style="left:45.00px;top:113.91px;font-size:5.9px;color:#4A4A4A;font-weight:400;transform:scaleX(0.924);-webkit-text-stroke:0.15px #4A4A4A;">Units: mm</div><div class="t" style="left:57.60px;top:125.81px;font-size:5.9px;color:#4A4A4A;font-weight:400;transform:scaleX(0.948);-webkit-text-stroke:0.15px #4A4A4A;">Origin</div><div class="t" style="left:57.60px;top:137.81px;font-size:5.9px;color:#4A4A4A;font-weight:400;transform:scaleX(0.971);-webkit-text-stroke:0.15px #4A4A4A;">Bodies</div><div class="t" style="left:57.60px;top:149.81px;font-size:5.9px;color:#4A4A4A;font-weight:400;transform:scaleX(0.941);-webkit-text-stroke:0.15px #4A4A4A;">Sketches</div><div class="t" style="left:15.70px;top:395.09px;font-size:5.8px;color:#8A8A8A;font-weight:400;transform:scaleX(0.845);">COMMENTS</div>
</body></html>
